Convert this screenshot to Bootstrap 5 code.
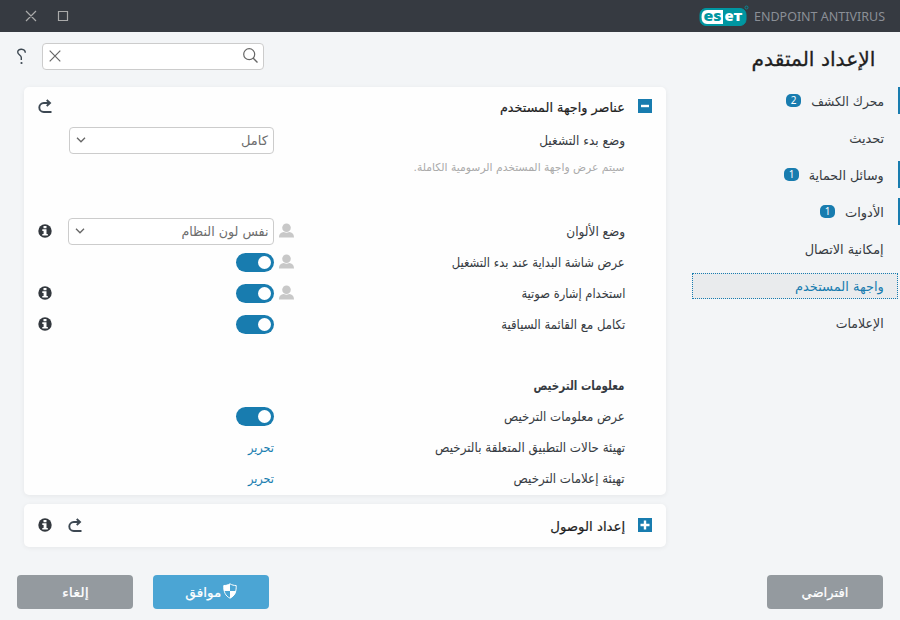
<!DOCTYPE html>
<html lang="ar" dir="rtl">
<head>
<meta charset="utf-8">
<title>ESET Endpoint Antivirus</title>
<link href="https://cdn.jsdelivr.net/npm/bootstrap@5.3.0/dist/css/bootstrap.min.css" rel="stylesheet">
<style>
body{width:900px;height:620px;overflow:hidden;background:#f3f5f7;color:#363b42;font:13px/20px "DejaVu Sans",sans-serif}
svg{display:block;flex:none}
.titlebar{height:32px;background:#363a41;padding:0 15px 0 24px}
.product{font-family:"Noto Sans","Open Sans",sans-serif;font-weight:400;font-size:13px;color:#8b8f96;margin-left:5px}
.fit{display:inline-block;white-space:nowrap;flex:none}
.fit>span{display:inline-block;transform-origin:100% 50%}
.side{width:210px}
.side h1{font-size:20px;line-height:28px;height:28px;margin:13px 25px 14px 0;color:#1f1f1f;font-weight:400;-webkit-text-stroke:.3px #1f1f1f}
.side-item{height:27px;margin-bottom:10px;padding-top:2px;padding-right:13px;margin-left:2px;border:0;border-right:3px solid transparent}
.side-item.changed{border-right:0;box-shadow:inset -2px 0 #187caf;margin-left:0;padding-right:16px}
.side-item.chosen{background:#e9ebed;border:1px dotted #187caf;color:#187caf;margin-top:11px;margin-right:2px;padding-right:13px;height:26px}
.count{width:15px;height:13px;border-radius:5px;background:#187caf;color:#fff;font:10px/13px "Noto Sans",sans-serif;text-align:center;margin-right:10px;margin-top:-3px}
.main{width:690px;padding:11px 24px 0 24px}
.tools{margin-left:-8px;gap:15px}
.search{width:222px;height:27px;border:1px solid #ccc;border-radius:4px;background:#fff;padding:0 5px 2px 6px}
.panel{background:#fefefe;border-radius:5px;width:642px;box-shadow:0 1px 5px rgba(0,0,0,.06);padding:0 14px}
.panel-open{height:408px;margin-top:17px;padding-top:4px}
.panel-closed{height:43px;margin-top:9px}
.line{height:31px}
.line-first{margin-top:3px}
.line-group{margin-top:30px}
.note{height:60px;padding-top:2px;margin-right:27px;color:#aaa;font-size:11px}
.name{width:331px;margin-right:27px}
.person{width:15px;margin-left:5px;padding-bottom:2px}
.ctl{width:206px}
.info-ico{padding-bottom:1px}
.pick{height:27px;border:1px solid #ccc;border-radius:4px;color:#6d6d6d;padding:0 5px 0 7px;background:#fff}
.pick svg{margin-bottom:2px;margin-left:-1px}
.pick .fit{padding-top:1px}
.pick-narrow{width:205px}
.switch{width:38px;height:19px;border-radius:10px;background:#187caf;padding:0 3px}
.switch i{width:13px;height:13px;border-radius:50%;background:#fff}
.link{color:#187caf}
.sec{color:#1f1f1f}
.sec .fit{margin-right:13px;padding-top:2px;-webkit-text-stroke:.2px #1f1f1f}
.sec .box{margin-bottom:2px}
.act{width:116px;height:34px;border-radius:4px;color:#fff;background:#949a9f;font-size:13px}
.act .fit{padding-top:1px;-webkit-text-stroke:.2px #fff}
.act.ok{background:#4ba5d4}
.act.ok svg{margin-left:1px;margin-bottom:2px}
.footbar{padding:28px 17px 0}
.footbar .pair{gap:20px}
</style>
</head>
<body>
<svg class="d-none">
<symbol id="info" viewBox="0 0 14 14"><circle cx="7" cy="7" r="6.700" fill="#33383e"/><path d="M5.500 2h3v2.300h-3zM4.300 5.300h4.200v4.600h1.300v1.600H4.300V9.900h1.300V6.900H4.300z" fill="#fff"/></symbol>
<symbol id="undo" viewBox="0 0 14 15"><path d="M13.500 13H5.800A4.500 4.500 0 0 1 5.800 4H11.500" fill="none" stroke="#3d4852" stroke-width="1.900"/><path d="M8.700 1L12 4 8.700 7" fill="none" stroke="#3d4852" stroke-width="1.900"/></symbol>
<symbol id="user" viewBox="0 0 15 15"><circle cx="7.500" cy="4.700" r="4.300" fill="#c8c8c8"/><path d="M0 14.500c0-4 2-5 4.800-5.500q2.700 1.500 5.400 0c2.800.5 4.800 1.500 4.800 5.500z" fill="#c8c8c8"/></symbol>
<symbol id="down" viewBox="0 0 10 6"><path d="M1 .8l4 4 4-4" fill="none" stroke="#666" stroke-width="1.300"/></symbol>
</svg>
<header class="titlebar d-flex align-items-center justify-content-between">
<div class="d-flex align-items-center" dir="ltr">
<svg width="50" height="22" viewBox="0 0 50 22"><rect x="1" y="3.500" width="46" height="17" rx="6" fill="#0096a1" stroke="#0096a1"/><path d="M24 5v14H8Q2.500 19 2.500 12T8 5z" fill="#fff"/><g font-family="Open Sans,sans-serif" font-weight="800" font-size="14.500"><text x="4.500" y="16.300" fill="#0096a1" textLength="18" lengthAdjust="spacingAndGlyphs">es</text><text x="25.500" y="16.300" fill="#fff" textLength="18" lengthAdjust="spacingAndGlyphs">eт</text></g><circle cx="47.500" cy="2.500" r="1.500" fill="none" stroke="#0096a1" stroke-width=".8"/></svg>
<span class="product fit" data-w="131"><span>ENDPOINT ANTIVIRUS</span></span>
</div>
<div class="d-flex align-items-center" dir="ltr">
<svg width="46" height="14" viewBox="0 0 46 14"><path d="M2 2l10 10M12 2L2 12M34.500 2.500h9v9h-9z" fill="none" stroke="#aaa" stroke-width="1.200"/></svg>
</div>
</header>
<div class="d-flex">
<nav class="side">
<h1><span class="fit" data-w="124"><span>الإعداد المتقدم</span></span></h1>
<div class="side-item changed d-flex align-items-center"><span class="fit" data-w="73"><span>محرك الكشف</span></span><span class="count">2</span></div>
<div class="side-item d-flex align-items-center"><span class="fit" data-w="35"><span>تحديث</span></span></div>
<div class="side-item changed d-flex align-items-center"><span class="fit" data-w="75"><span>وسائل الحماية</span></span><span class="count">1</span></div>
<div class="side-item changed d-flex align-items-center"><span class="fit" data-w="39"><span>الأدوات</span></span><span class="count">1</span></div>
<div class="side-item d-flex align-items-center"><span class="fit" data-w="79"><span>إمكانية الاتصال</span></span></div>
<div class="side-item chosen d-flex align-items-center"><span class="fit" data-w="89"><span>واجهة المستخدم</span></span></div>
<div class="side-item d-flex align-items-center"><span class="fit" data-w="48"><span>الإعلامات</span></span></div>
</nav>
<main class="main">
<div class="tools d-flex align-items-center" dir="ltr">
<svg width="11" height="17" viewBox="0 0 11 17"><path d="M9.300 4.800C9.300 .3 1.700 0 1.700 4c0 3 3.600 3 3.600 5.500v2.500" fill="none" stroke="#3d4852" stroke-width="1.400"/><circle cx="5.500" cy="15" r="1.100" fill="#3d4852"/></svg>
<div class="search d-flex align-items-center justify-content-between">
<svg width="12" height="12" viewBox="0 0 12 12"><path d="M.7.700l10.600 10.600M11.300.7L.7 11.300" stroke="#666" stroke-width="1.200"/></svg>
<svg width="15" height="15" viewBox="0 0 15 15"><circle cx="6.200" cy="6.200" r="5.500" fill="none" stroke="#666" stroke-width="1.200"/><path d="M10 10l4.500 4.500" stroke="#666" stroke-width="1.300"/></svg>
</div>
</div>
<section class="panel panel-open">
<div class="line d-flex align-items-center justify-content-between sec">
<div class="d-flex align-items-center"><svg class="box" width="14" height="14"><path d="M0 0h14v14H0z" fill="#187caf"/><path d="M3 7h8" stroke="#fff" stroke-width="2.400"/></svg><span class="fit" data-w="125"><span>عناصر واجهة المستخدم</span></span></div>
<svg width="14" height="15"><use href="#undo"/></svg>
</div>
<div class="line line-first d-flex align-items-center"><div class="name"><span class="fit" data-w="86"><span>وضع بدء التشغيل</span></span></div><div class="person"></div><div class="ctl"><div class="pick pick-narrow d-flex align-items-center justify-content-between"><span class="fit" data-w="27"><span>كامل</span></span><svg width="10" height="6"><use href="#down"/></svg></div></div></div>
<div class="note"><span class="fit" data-w="211"><span>سيتم عرض واجهة المستخدم الرسومية الكاملة.</span></span></div>
<div class="line d-flex align-items-center"><div class="name"><span class="fit" data-w="59"><span>وضع الألوان</span></span></div><div class="person"><svg width="15" height="15"><use href="#user"/></svg></div><div class="ctl"><div class="pick d-flex align-items-center justify-content-between"><span class="fit" data-w="87"><span>نفس لون النظام</span></span><svg width="10" height="6"><use href="#down"/></svg></div></div><div class="info-ico me-auto"><svg width="14" height="14"><use href="#info"/></svg></div></div>
<div class="line d-flex align-items-center"><div class="name"><span class="fit" data-w="173"><span>عرض شاشة البداية عند بدء التشغيل</span></span></div><div class="person"><svg width="15" height="15"><use href="#user"/></svg></div><div class="ctl"><div class="switch d-flex align-items-center"><i></i></div></div></div>
<div class="line d-flex align-items-center"><div class="name"><span class="fit" data-w="104"><span>استخدام إشارة صوتية</span></span></div><div class="person"><svg width="15" height="15"><use href="#user"/></svg></div><div class="ctl"><div class="switch d-flex align-items-center"><i></i></div></div><div class="info-ico me-auto"><svg width="14" height="14"><use href="#info"/></svg></div></div>
<div class="line d-flex align-items-center"><div class="name"><span class="fit" data-w="124"><span>تكامل مع القائمة السياقية</span></span></div><div class="person"></div><div class="ctl"><div class="switch d-flex align-items-center"><i></i></div></div><div class="info-ico me-auto"><svg width="14" height="14"><use href="#info"/></svg></div></div>
<div class="line line-group d-flex align-items-center"><div class="name fw-bold"><span class="fit" data-w="91"><span>معلومات الترخيص</span></span></div></div>
<div class="line d-flex align-items-center"><div class="name"><span class="fit" data-w="121"><span>عرض معلومات الترخيص</span></span></div><div class="person"></div><div class="ctl"><div class="switch d-flex align-items-center"><i></i></div></div></div>
<div class="line d-flex align-items-center"><div class="name"><span class="fit" data-w="190"><span>تهيئة حالات التطبيق المتعلقة بالترخيص</span></span></div><div class="person"></div><div class="ctl link"><span class="fit" data-w="26"><span>تحرير</span></span></div></div>
<div class="line d-flex align-items-center"><div class="name"><span class="fit" data-w="111"><span>تهيئة إعلامات الترخيص</span></span></div><div class="person"></div><div class="ctl link"><span class="fit" data-w="26"><span>تحرير</span></span></div></div>
</section>
<section class="panel panel-closed sec d-flex align-items-center justify-content-between">
<div class="d-flex align-items-center"><svg class="box" width="14" height="14"><path d="M0 0h14v14H0z" fill="#187caf"/><path d="M2.500 7h9M7 2.500v9" stroke="#fff" stroke-width="2.400"/></svg><span class="fit" data-w="75"><span>إعداد الوصول</span></span></div>
<div class="d-flex align-items-center gap-3"><svg width="14" height="15"><use href="#undo"/></svg><div class="info-ico"><svg width="14" height="14"><use href="#info"/></svg></div></div>
</section>
</main>
</div>
<footer class="footbar d-flex justify-content-between">
<div class="act d-flex align-items-center justify-content-center"><span class="fit" data-w="47"><span>افتراضي</span></span></div>
<div class="pair d-flex">
<div class="act ok d-flex align-items-center justify-content-center"><svg width="14" height="16" viewBox="0 0 14 16"><path d="M7 .8c2 1.300 4 1.700 6.200 1.700C13.500 9 11.500 13 7 15.200 2.500 13 .5 9 .8 2.500 3 2.500 5 2.100 7 .8z" fill="#4ba5d4" stroke="#fff"/><path d="M7 .8V8H1C.7 6.500.7 4.500.8 2.500 3 2.500 5 2.100 7 .8zM7 8h6c-.8 3.500-2.500 5.700-6 7.200z" fill="#fff"/></svg><span class="fit" data-w="36"><span>موافق</span></span></div>
<div class="act d-flex align-items-center justify-content-center"><span class="fit" data-w="27"><span>إلغاء</span></span></div>
</div>
</footer>
<script src="https://cdn.jsdelivr.net/npm/bootstrap@5.3.0/dist/js/bootstrap.bundle.min.js"></script>
<script>
// Condense each label to the width reserved for it.
document.querySelectorAll('.fit').forEach(function (el) {
  var inner = el.firstElementChild, w = +el.dataset.w, rtl = getComputedStyle(el).direction === 'rtl';
  var natural = inner.getBoundingClientRect().width;
  el.style.width = w + 'px';
  inner.style.transformOrigin = rtl ? '100% 50%' : '0 50%';
  inner.style.transform = 'scaleX(' + w / natural + ')';
});
</script>
</body>
</html>
